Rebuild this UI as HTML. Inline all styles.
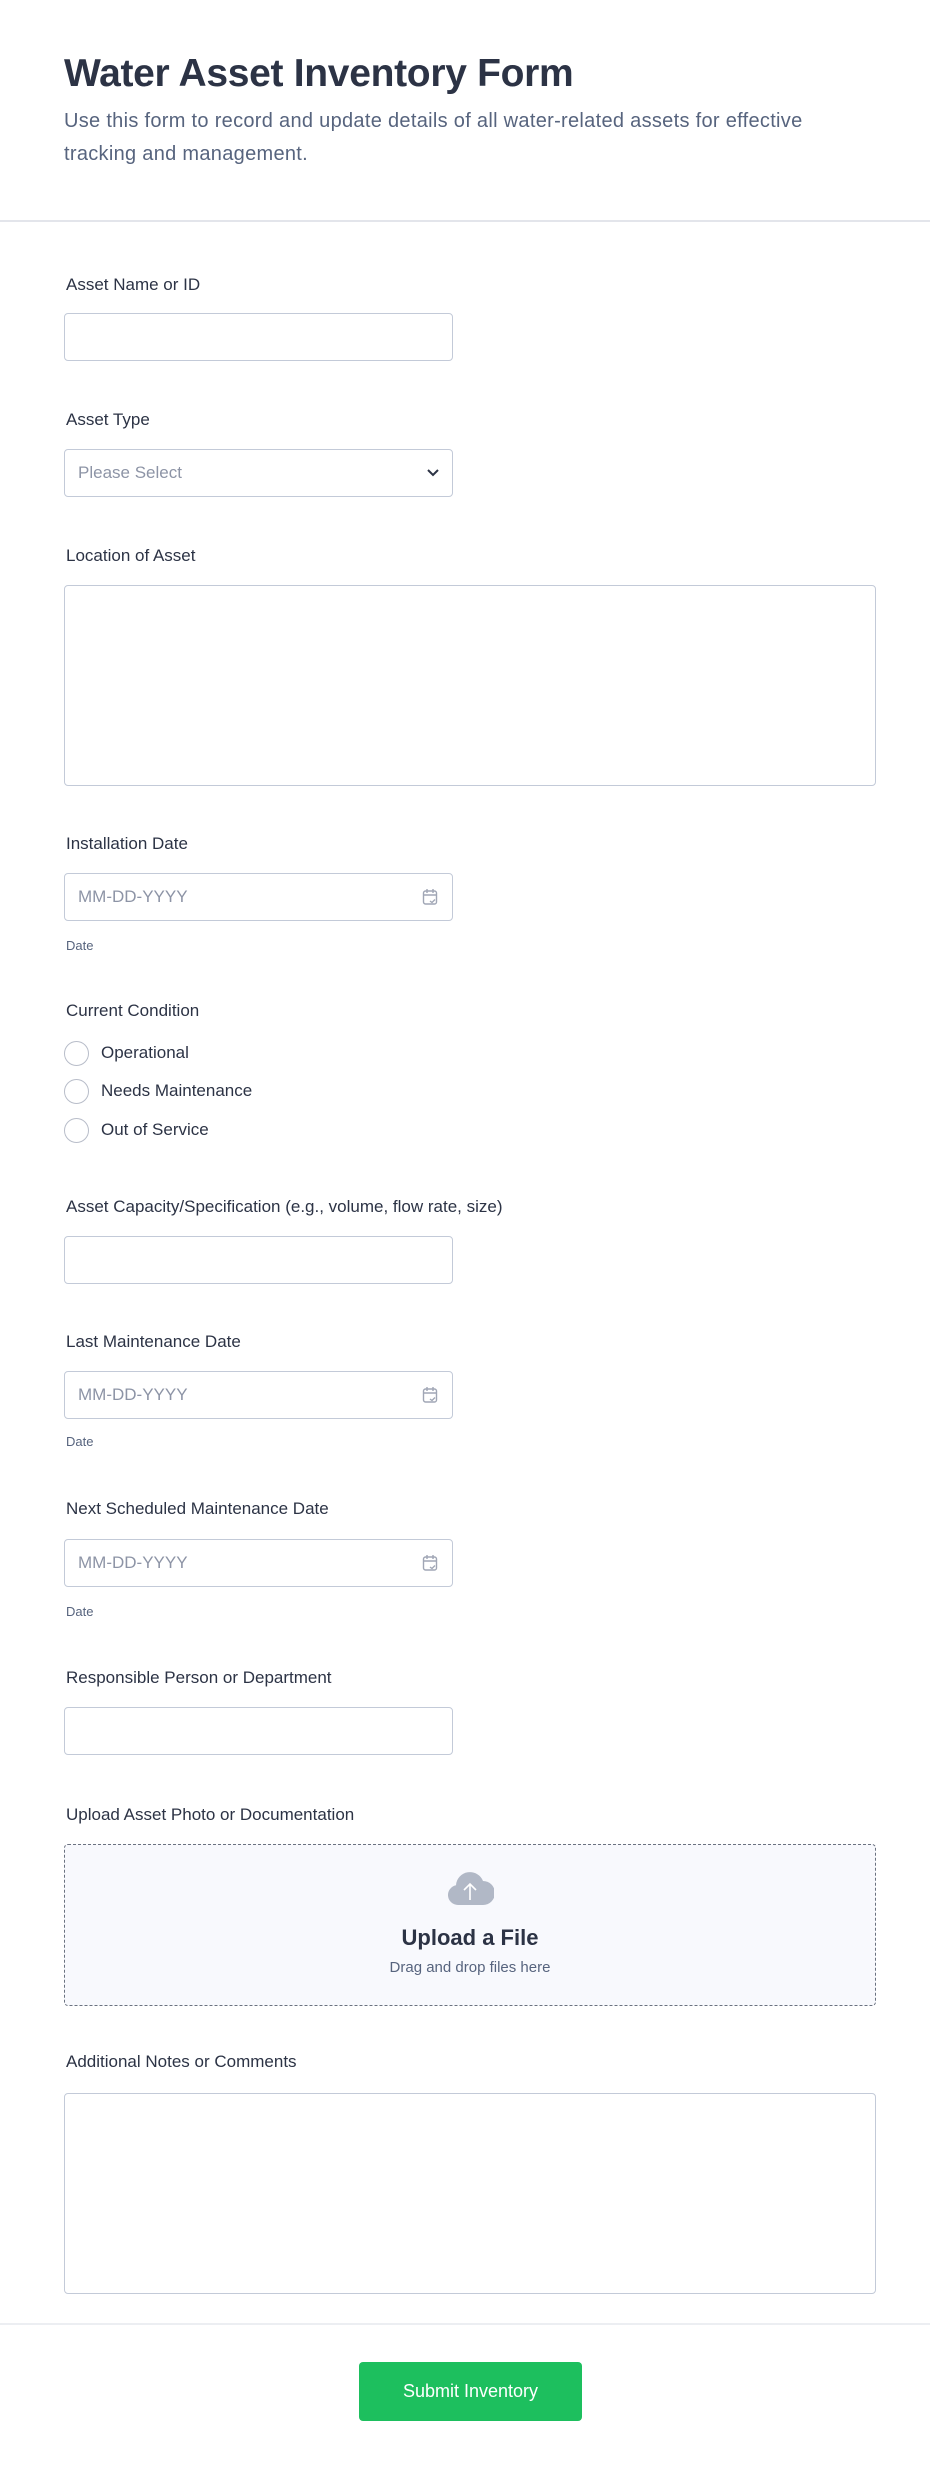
<!DOCTYPE html>
<html><head><meta charset="utf-8"><style>
*{box-sizing:border-box;margin:0;padding:0}
body{width:930px;height:2472px;background:#fff;font-family:"Liberation Sans",Arial,sans-serif;color:#2c3345;position:relative;overflow:hidden}
.a{position:absolute}
h1{position:absolute;left:64px;top:52px;font-size:39px;font-weight:bold;color:#2c3345;letter-spacing:-0.3px}
.sub{position:absolute;left:64px;top:105px;width:790px;font-size:20px;letter-spacing:0.3px;line-height:33px;color:#57647e}
.hr{position:absolute;left:0;width:930px;height:2px;background:#e3e5eb}
.lbl{position:absolute;left:66px;font-size:17px;color:#2c3345;line-height:20px;margin-top:1px}
.in{position:absolute;left:64px;width:389px;height:48px;border:1px solid #c3cad8;border-radius:4px;background:#fff}
.ph{position:absolute;left:13px;top:13px;font-size:17px;color:#8d94a6}
.ta{position:absolute;left:64px;width:812px;height:201px;border:1px solid #c3cad8;border-radius:4px}
.small{position:absolute;left:66px;font-size:13px;color:#57647e}
.rad{position:absolute;left:64px;width:25px;height:25px;border:1px solid #b8bdc9;border-radius:50%}
.rt{position:absolute;left:101px;font-size:17px;color:#2c3345}
</style></head><body>
<h1>Water Asset Inventory Form</h1>
<div class="sub">Use this form to record and update details of all water-related assets for effective tracking and management.</div>
<div class="hr" style="top:220px"></div>

<div class="lbl" style="top:274px">Asset Name or ID</div>
<div class="in" style="top:313px"></div>

<div class="lbl" style="top:409px">Asset Type</div>
<div class="in" style="top:449px"><span class="ph">Please Select</span>
<svg class="a" style="right:12px;top:18px" width="14" height="10" viewBox="0 0 14 10"><path d="M2 2l5 5 5-5" fill="none" stroke="#2c3345" stroke-width="2"/></svg></div>

<div class="lbl" style="top:545px">Location of Asset</div>
<div class="ta" style="top:585px"></div>

<div class="lbl" style="top:833px">Installation Date</div>
<div class="in" style="top:873px"><span class="ph">MM-DD-YYYY</span>
<svg class="a" style="right:14px;top:14px" width="16" height="18" viewBox="0 0 16 18"><rect x="1.5" y="3" width="13" height="13" rx="2" fill="none" stroke="#a0a6b5" stroke-width="1.4"/><path d="M1.5 7h13M5 1v4M11 1v4M8 13l2 1.5 3-3" fill="none" stroke="#a0a6b5" stroke-width="1.4"/></svg></div>
<div class="small" style="top:938px">Date</div>

<div class="lbl" style="top:1000px">Current Condition</div>
<div class="rad" style="top:1041px"></div><div class="rt" style="top:1043px">Operational</div>
<div class="rad" style="top:1079px"></div><div class="rt" style="top:1081px">Needs Maintenance</div>
<div class="rad" style="top:1118px"></div><div class="rt" style="top:1120px">Out of Service</div>

<div class="lbl" style="top:1196px">Asset Capacity/Specification (e.g., volume, flow rate, size)</div>
<div class="in" style="top:1236px"></div>

<div class="lbl" style="top:1331px">Last Maintenance Date</div>
<div class="in" style="top:1371px"><span class="ph">MM-DD-YYYY</span>
<svg class="a" style="right:14px;top:14px" width="16" height="18" viewBox="0 0 16 18"><rect x="1.5" y="3" width="13" height="13" rx="2" fill="none" stroke="#a0a6b5" stroke-width="1.4"/><path d="M1.5 7h13M5 1v4M11 1v4M8 13l2 1.5 3-3" fill="none" stroke="#a0a6b5" stroke-width="1.4"/></svg></div>
<div class="small" style="top:1434px">Date</div>

<div class="lbl" style="top:1498px">Next Scheduled Maintenance Date</div>
<div class="in" style="top:1539px"><span class="ph">MM-DD-YYYY</span>
<svg class="a" style="right:14px;top:14px" width="16" height="18" viewBox="0 0 16 18"><rect x="1.5" y="3" width="13" height="13" rx="2" fill="none" stroke="#a0a6b5" stroke-width="1.4"/><path d="M1.5 7h13M5 1v4M11 1v4M8 13l2 1.5 3-3" fill="none" stroke="#a0a6b5" stroke-width="1.4"/></svg></div>
<div class="small" style="top:1604px">Date</div>

<div class="lbl" style="top:1667px">Responsible Person or Department</div>
<div class="in" style="top:1707px"></div>

<div class="lbl" style="top:1804px">Upload Asset Photo or Documentation</div>
<div class="a" style="left:64px;top:1844px;width:812px;height:162px;border:1.5px dashed #6b7280;border-radius:4px;background:#f8f9fd">
<svg class="a" style="left:381px;top:27px" width="48" height="34" viewBox="0 0 48 34"><path d="M12 33a10 10 0 0 1-2-19.8A14 14 0 0 1 37 9a11 11 0 0 1 0 24z" fill="#b1b8c6"/><path d="M24 28V12M18 18l6-6 6 6" fill="none" stroke="#fff" stroke-width="1.6"/></svg>
<div class="a" style="left:0;width:100%;top:80px;text-align:center;font-size:22px;font-weight:bold;color:#2c3345">Upload a File</div>
<div class="a" style="left:0;width:100%;top:114px;text-align:center;font-size:15px;color:#57647e">Drag and drop files here</div>
</div>

<div class="lbl" style="top:2051px">Additional Notes or Comments</div>
<div class="ta" style="top:2093px"></div>

<div class="hr" style="top:2323px;height:2px;background:#eceef2"></div>
<div class="a" style="left:359px;top:2362px;width:223px;height:59px;background:#1dbf5e;border-radius:4px;color:#fff;font-size:18px;text-align:center;line-height:59px">Submit Inventory</div>
</body></html>
